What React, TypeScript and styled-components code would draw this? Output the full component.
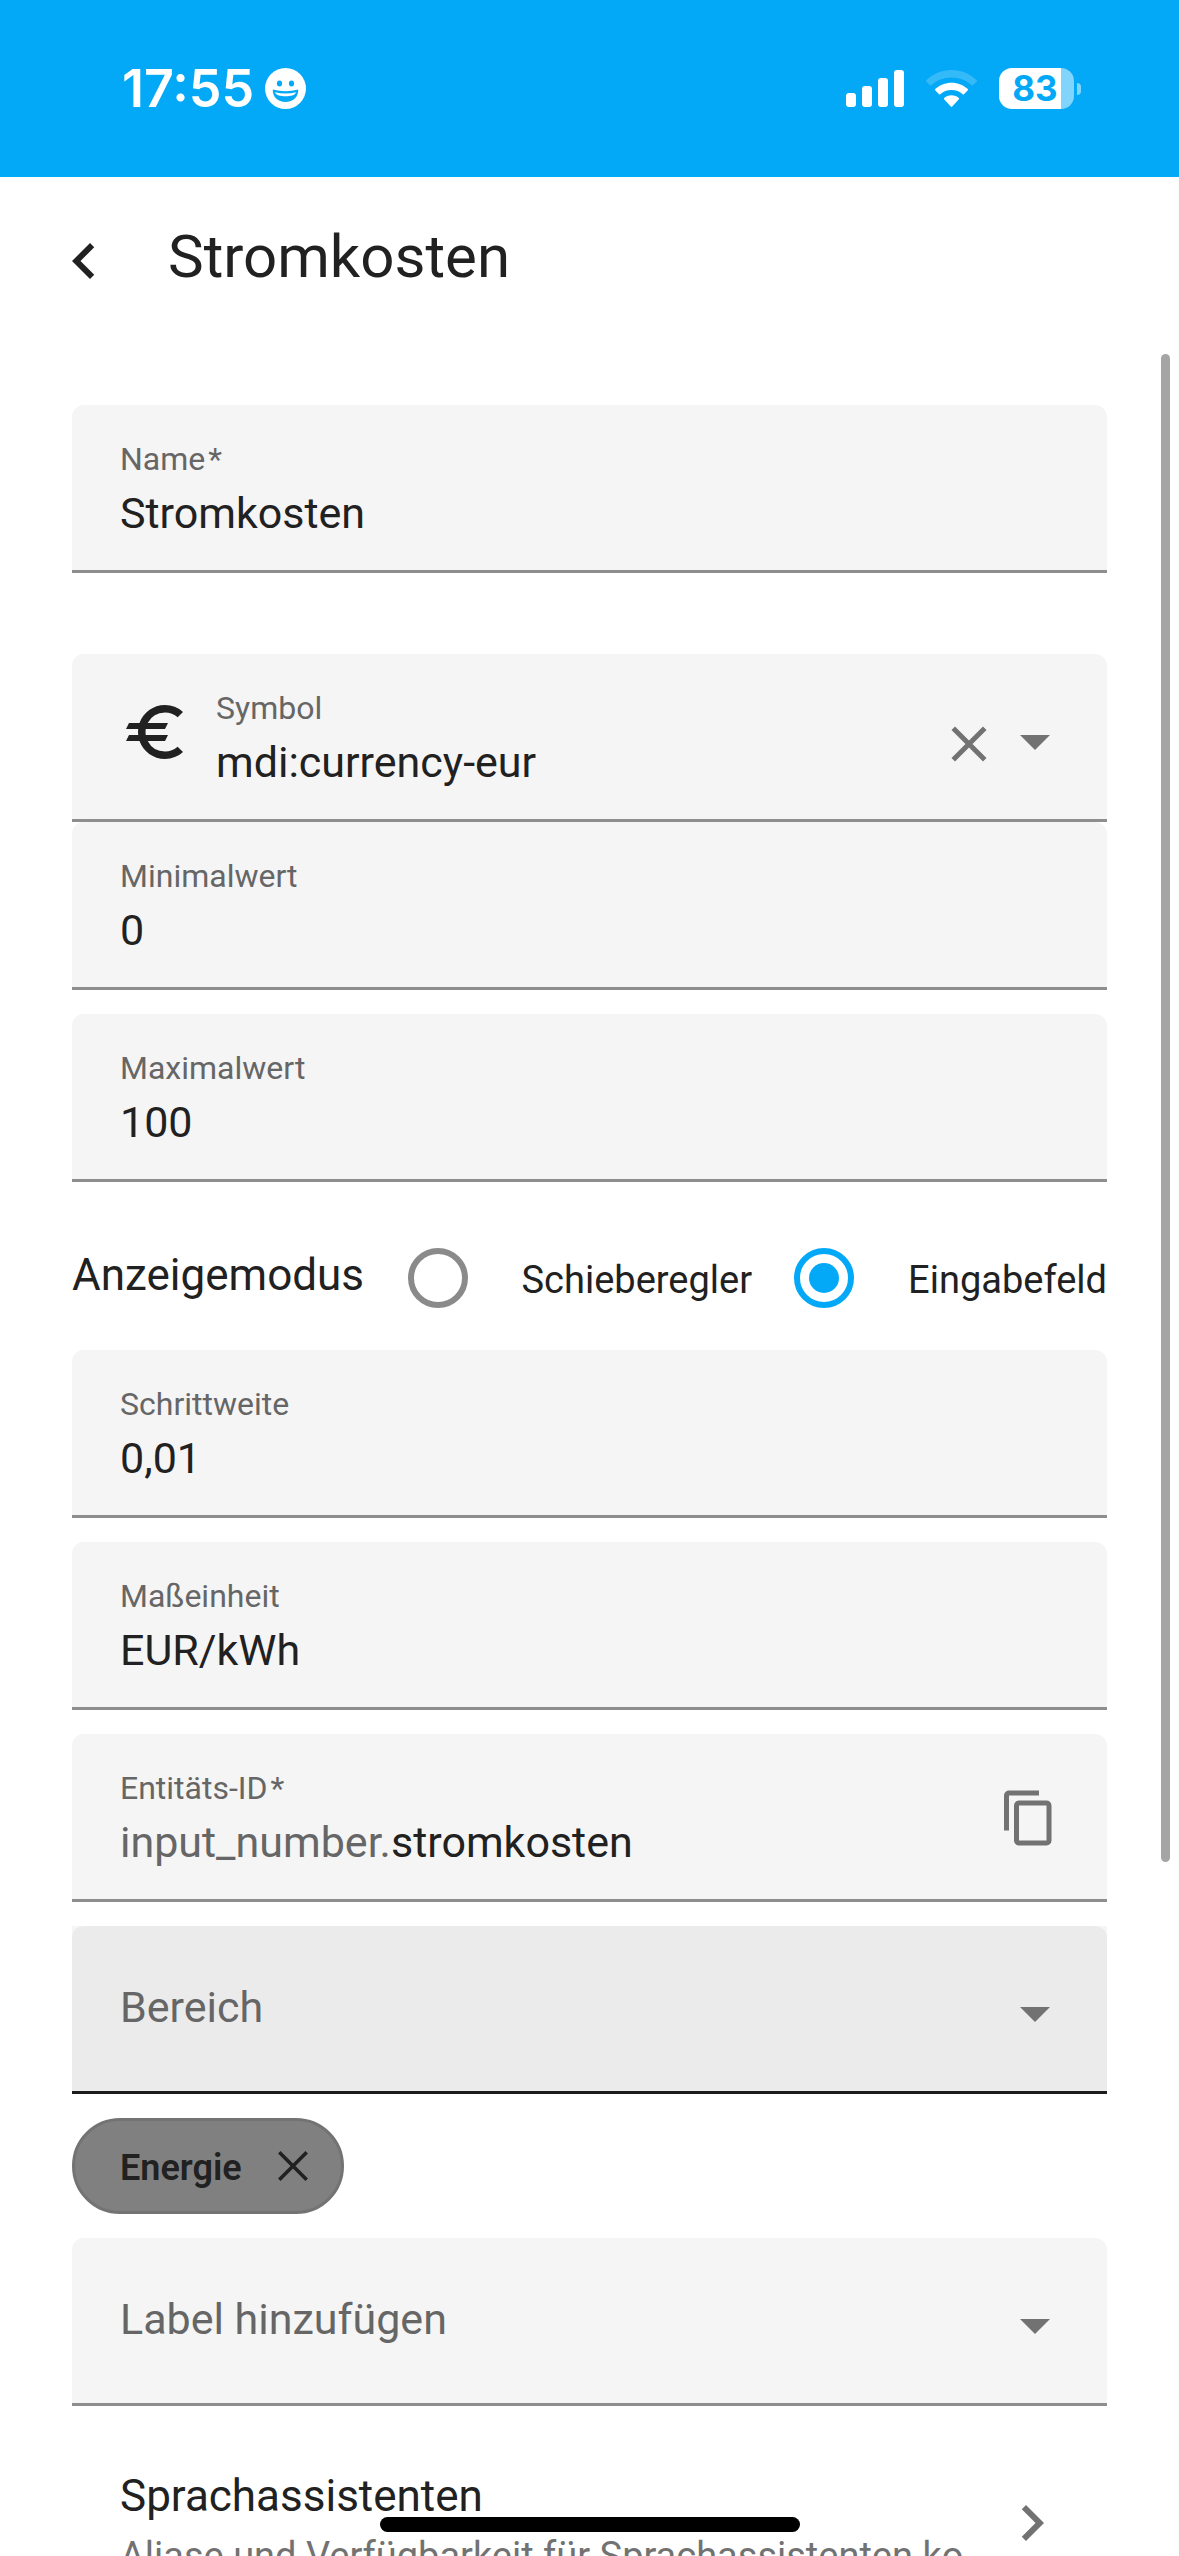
import React, { useId, useState } from 'react';
import styled, { createGlobalStyle } from 'styled-components';

const color = {
  primary: '#03a9f7',
  text: '#212121',
  secondary: '#666666',
  icon: '#727272',
  fill: '#f5f5f5',
  fillActive: '#ebebeb',
  line: '#8e8e8e',
};

const GlobalStyle = createGlobalStyle`
  *, *::before, *::after { box-sizing: border-box; }
  body {
    margin: 0;
    background: #fff;
    color: ${color.text};
    font-family: Roboto, "Noto Sans", sans-serif;
    overflow: hidden;
  }
  button, input, select { font: inherit; color: inherit; }
`;

const Screen = styled.div`
  position: relative;
  display: flex;
  flex-direction: column;
  height: 100vh;
  overflow: hidden;
`;

const StatusBar = styled.div`
  flex: none;
  display: flex;
  align-items: center;
  justify-content: space-between;
  height: 177px;
  padding: 0 98px 0 122px;
  background: ${color.primary};
  color: #fff;
  font-family: Inter, Roboto, sans-serif;
`;

const StatusGroup = styled.div<{ $gap: number }>`
  display: flex;
  align-items: center;
  gap: ${(p) => p.$gap}px;
`;

const Clock = styled.span`
  font-size: 52px;
  line-height: 60px;
  font-weight: 600;
`;

const Battery = styled.span`
  display: flex;
  align-items: center;
  gap: 3px;
`;

const BatteryBody = styled.span`
  display: flex;
  align-items: center;
  justify-content: center;
  width: 75px;
  height: 41px;
  padding-right: 3px;
  border-radius: 13px;
  background: linear-gradient(to right, #fff 83%, #81d4fb 83%);
  color: ${color.primary};
  font-size: 35px;
  line-height: 41px;
  font-weight: 700;
`;

const BatteryTip = styled.span`
  width: 4px;
  height: 12px;
  border-radius: 0 6px 6px 0;
  background: #81d4fb;
`;

const Header = styled.header`
  flex: none;
  display: flex;
  align-items: center;
  gap: 48px;
  height: 168px;
  padding: 0 48px;
`;

const Title = styled.h1`
  margin: 0;
  padding-bottom: 9px;
  font-size: 60px;
  line-height: 72px;
  font-weight: 400;
`;

const IconButton = styled.button<{ $tone?: string }>`
  flex: none;
  display: flex;
  padding: 0;
  border: 0;
  background: none;
  color: ${(p) => p.$tone ?? color.icon};
`;

const Content = styled.main`
  flex: 1;
  min-height: 0;
  padding: 60px 72px 0;
  overflow: hidden;
`;

const Stack = styled.div<{ $top?: number }>`
  display: flex;
  flex-direction: column;
  align-items: stretch;
  gap: 24px;
  margin-top: ${(p) => p.$top ?? 0}px;
`;

const FieldBox = styled.div`
  display: flex;
  align-items: center;
  gap: 24px;
  height: 168px;
  padding: 0 48px;
  border-bottom: 3px solid ${color.line};
  border-radius: 12px 12px 0 0;
  background: ${color.fill};
`;

const FieldText = styled.div`
  flex: 1;
  min-width: 0;
  display: flex;
  flex-direction: column;
  gap: 12px;
  padding-top: 3px;
`;

const FieldLabel = styled.label`
  color: ${color.secondary};
  font-size: 32px;
  line-height: 36px;
`;

const RequiredMark = styled.span`
  margin-left: 3px;
`;

const ValueRow = styled.div`
  display: flex;
  align-items: center;
  font-size: 43px;
  line-height: 48px;
`;

const Prefix = styled.span`
  flex: none;
  color: ${color.secondary};
`;

const ValueInput = styled.input`
  flex: 1;
  min-width: 0;
  width: 100%;
  height: 48px;
  padding: 0;
  border: 0;
  outline: 0;
  background: none;
`;

const FieldActions = styled.div`
  display: flex;
  align-items: center;
  padding-top: 3px;
`;

const ComboActions = styled.div`
  display: flex;
  align-items: flex-end;
  padding-top: 9px;
  margin-right: -12px;
`;

const ClearSlot = styled.span`
  display: flex;
  padding-bottom: 3px;
`;

const LeadingIcon = styled.span`
  display: flex;
  padding-bottom: 9px;
`;

const SelectBacking = styled.div`
  background: ${color.fill};
`;

const SelectField = styled.div<{ $active?: boolean }>`
  display: grid;
  align-items: center;
  height: 168px;
  border-bottom: 3px solid ${(p) => (p.$active ? '#1c1c1c' : color.line)};
  border-radius: 12px 12px 0 0;
  background: ${(p) => (p.$active ? color.fillActive : color.fill)};
  color: ${color.icon};

  > * { grid-area: 1 / 1; }
  > svg { justify-self: end; margin: 9px 36px 0 0; pointer-events: none; }
`;

const Select = styled.select`
  appearance: none;
  width: 100%;
  height: 165px;
  padding: 0 120px 3px 48px;
  border: 0;
  outline: 0;
  background: none;
  color: ${color.secondary};
  font-size: 43px;
  line-height: 48px;
`;

const ModeRow = styled.div`
  display: flex;
  align-items: center;
  justify-content: space-between;
  height: 120px;
  margin: 36px 0 12px;
  white-space: nowrap;
`;

const ModeTitle = styled.span`
  padding-bottom: 6px;
  font-size: 44px;
  line-height: 48px;
`;

const ModeOptions = styled.div`
  display: flex;
  align-items: center;
  gap: 42px;
`;

const ModeOption = styled.label`
  display: flex;
  align-items: center;
  gap: 54px;
  font-size: 38px;
  line-height: 42px;
`;

const ModeName = styled.span`
  padding-top: 3px;
`;

const Radio = styled.input`
  appearance: none;
  display: grid;
  place-items: center;
  width: 60px;
  height: 60px;
  margin: 0;
  border: 6px solid #8a8a8a;
  border-radius: 50%;

  &:checked { border-color: ${color.primary}; }
  &:checked::before {
    content: '';
    width: 30px;
    height: 30px;
    border-radius: 50%;
    background: ${color.primary};
  }
`;

const Chip = styled.span`
  align-self: flex-start;
  display: flex;
  align-items: center;
  gap: 36px;
  height: 96px;
  padding: 0 33px 0 45px;
  border: 3px solid #737373;
  border-radius: 48px;
  background: #808080;
  font-size: 36px;
  line-height: 42px;
  font-weight: 600;
`;

const ChipName = styled.span`
  padding-top: 3px;
`;

const AssistLink = styled.a`
  display: flex;
  align-items: center;
  margin-top: 66px;
  padding: 0 39px 0 48px;
  color: ${color.text};
  text-decoration: none;

  > svg { flex: none; margin-bottom: 6px; color: ${color.icon}; }
`;

const AssistText = styled.span`
  flex: 1;
  min-width: 0;
  display: flex;
  flex-direction: column;
  gap: 12px;
`;

const AssistTitle = styled.span`
  font-size: 44px;
  line-height: 48px;
`;

const AssistDetail = styled.span`
  overflow: hidden;
  color: ${color.icon};
  font-size: 38px;
  line-height: 48px;
  text-overflow: ellipsis;
  white-space: nowrap;
`;

const ScrollThumb = styled.div`
  position: absolute;
  top: 354px;
  right: 9px;
  width: 9px;
  height: 59vh;
  border-radius: 5px;
  background: #a5a5a5;
`;

const HomeIndicator = styled.div`
  position: absolute;
  bottom: 24px;
  left: 50%;
  width: 420px;
  height: 15px;
  margin-left: -210px;
  border-radius: 8px;
  background: #000;
`;

const paths = {
  back: 'M15.41 16.58L10.83 12l4.58-4.59L14 6l-6 6 6 6z',
  forward: 'M8.59 16.58L13.17 12 8.59 7.41 10 6l6 6-6 6z',
  down: 'M7 10l5 5 5-5z',
  close:
    'M19 6.41L17.59 5 12 10.59 6.41 5 5 6.41 10.59 12 5 17.59 6.41 19 12 13.41 17.59 19 19 17.59 13.41 12z',
  copy: 'M19 21H8V7h11m0-2H8a2 2 0 0 0-2 2v14a2 2 0 0 0 2 2h11a2 2 0 0 0 2-2V7a2 2 0 0 0-2-2m-3-4H4a2 2 0 0 0-2 2v14h2V3h12z',
  euro: 'M15 18.5A6.48 6.48 0 0 1 9.24 15H15l1-2H8.58a6.6 6.6 0 0 1 0-2H15l1-2H9.24A6.49 6.49 0 0 1 15 5.5c1.61 0 3.09.59 4.23 1.57L21 5.3A8.96 8.96 0 0 0 15 3c-3.92 0-7.24 2.5-8.5 6H3l-1 2h4.06a8.26 8.26 0 0 0 0 2H3l-1 2h4.5c1.26 3.5 4.58 6 8.5 6 2.31 0 4.41-.87 6-2.3l-1.78-1.77A6.4 6.4 0 0 1 15 18.5z',
};

function Icon({ name, size = 72 }: { name: keyof typeof paths; size?: number }) {
  return (
    <svg width={size} height={size} viewBox="0 0 24 24" fill="currentColor" aria-hidden="true">
      <path d={paths[name]} />
    </svg>
  );
}

function SmileyIcon() {
  return (
    <svg width="41" height="41" viewBox="0 0 41 41" aria-hidden="true">
      <circle cx="20.500" cy="20.500" r="20.500" fill="#fff" />
      <g fill={color.primary}>
        <ellipse cx="14.500" cy="15.500" rx="2.600" ry="3" />
        <ellipse cx="26.500" cy="15.500" rx="2.600" ry="3" />
        <path d="M7.800 21.500Q20.500 25 33.200 21.500C33.600 29 28 34 20.500 34S7.400 29 7.800 21.500Z" />
      </g>
      <path d="M9.800 24.200Q20.500 27 31.200 24.200C29.800 27.300 25.500 28.200 20.500 28.200S11.200 27.300 9.800 24.200Z" fill="#fff" />
    </svg>
  );
}

function SignalIcon() {
  return (
    <svg width="58" height="37" viewBox="0 0 58 37" fill="#fff" aria-hidden="true">
      <rect x="0" y="23" width="10" height="14" rx="3" />
      <rect x="16" y="16" width="10" height="21" rx="3" />
      <rect x="32" y="8" width="10" height="29" rx="3" />
      <rect x="48" y="0" width="10" height="37" rx="3" />
    </svg>
  );
}

function WifiIcon() {
  return (
    <svg width="51" height="37" viewBox="0 0 51 37" fill="#fff" aria-hidden="true">
      <path
        d="M25.500 0C35.400 0 44.300 3.900 50.700 10.200C51.100 10.600 51.100 11 50.700 11.400L47 15.200C46.600 15.600 46.100 15.600 45.700 15.200C40.300 10.300 33.300 7.500 25.500 7.500S10.700 10.300 5.300 15.200C4.900 15.600 4.400 15.600 4 15.200L.3 11.400C-.1 11-.1 10.600.3 10.200C6.700 3.900 15.600 0 25.500 0Z"
        opacity="0.2"
      />
      <path d="M25.500 12.700C31.800 12.700 37.500 15.100 41.800 19.100C42.200 19.500 42.200 19.900 41.800 20.300L38 24.200C37.600 24.600 37.200 24.600 36.800 24.200C33.800 21.600 29.900 20 25.500 20S17.200 21.600 14.200 24.200C13.800 24.600 13.400 24.600 13 24.200L9.200 20.300C8.800 19.900 8.800 19.500 9.200 19.100C13.500 15.100 19.200 12.700 25.500 12.700Z" />
      <path d="M25.500 25.200C28.300 25.200 30.900 26.200 32.800 27.900C33.300 28.300 33.300 28.800 32.900 29.200L26.200 36.500C25.700 37 25.300 37 24.800 36.500L18.100 29.200C17.700 28.800 17.700 28.300 18.200 27.900C20.100 26.200 22.700 25.200 25.500 25.200Z" />
    </svg>
  );
}

function ChipCloseIcon() {
  return (
    <svg width="30" height="30" viewBox="0 0 30 30" fill="none" stroke="currentColor" strokeWidth="3.600" aria-hidden="true">
      <path d="M1.300 1.300L28.700 28.700M28.700 1.300L1.300 28.700" />
    </svg>
  );
}

type TextFieldProps = {
  label: string;
  value: string;
  prefix?: string;
  required?: boolean;
  leading?: React.ReactNode;
  actions?: React.ReactNode;
};

function TextField({ label, value, prefix, required, leading, actions }: TextFieldProps) {
  const id = useId();
  const [text, setText] = useState(value);
  return (
    <FieldBox>
      {leading}
      <FieldText>
        <FieldLabel htmlFor={id}>
          {label}
          {required && <RequiredMark>*</RequiredMark>}
        </FieldLabel>
        <ValueRow>
          {prefix && <Prefix>{prefix}</Prefix>}
          <ValueInput id={id} value={text} onChange={(e) => setText(e.target.value)} />
        </ValueRow>
      </FieldText>
      {actions}
    </FieldBox>
  );
}

function SelectBox({ label, active }: { label: string; active?: boolean }) {
  const field = (
    <SelectField $active={active}>
      <Select aria-label={label} defaultValue="">
        <option value="">{label}</option>
      </Select>
      <Icon name="down" />
    </SelectField>
  );
  return active ? <SelectBacking>{field}</SelectBacking> : field;
}

export default function App() {
  const [mode, setMode] = useState('box');
  return (
    <>
      <GlobalStyle />
      <Screen>
        <StatusBar>
          <StatusGroup $gap={11}>
            <Clock>17:55</Clock>
            <SmileyIcon />
          </StatusGroup>
          <StatusGroup $gap={22}>
            <SignalIcon />
            <WifiIcon />
            <Battery>
              <BatteryBody>83</BatteryBody>
              <BatteryTip />
            </Battery>
          </StatusGroup>
        </StatusBar>
        <Header>
          <IconButton type="button" aria-label="Zurück" $tone={color.text}>
            <Icon name="back" />
          </IconButton>
          <Title>Stromkosten</Title>
        </Header>
        <Content>
          <TextField label="Name" value="Stromkosten" required />
          <Stack $top={81}>
            <div>
              <TextField
                label="Symbol"
                value="mdi:currency-eur"
                leading={
                  <LeadingIcon>
                    <Icon name="euro" />
                  </LeadingIcon>
                }
                actions={
                  <ComboActions>
                    <ClearSlot>
                      <IconButton type="button" aria-label="Löschen">
                        <Icon name="close" size={60} />
                      </IconButton>
                    </ClearSlot>
                    <IconButton type="button" aria-label="Öffnen">
                      <Icon name="down" />
                    </IconButton>
                  </ComboActions>
                }
              />
              <TextField label="Minimalwert" value="0" />
            </div>
            <TextField label="Maximalwert" value="100" />
          </Stack>
          <ModeRow role="radiogroup" aria-label="Anzeigemodus">
            <ModeTitle>Anzeigemodus</ModeTitle>
            <ModeOptions>
              <ModeOption>
                <Radio type="radio" name="mode" checked={mode === 'slider'} onChange={() => setMode('slider')} />
                <ModeName>Schieberegler</ModeName>
              </ModeOption>
              <ModeOption>
                <Radio type="radio" name="mode" checked={mode === 'box'} onChange={() => setMode('box')} />
                <ModeName>Eingabefeld</ModeName>
              </ModeOption>
            </ModeOptions>
          </ModeRow>
          <Stack>
            <TextField label="Schrittweite" value="0,01" />
            <TextField label="Maßeinheit" value="EUR/kWh" />
            <TextField
              label="Entitäts-ID"
              value="stromkosten"
              prefix="input_number."
              required
              actions={
                <FieldActions>
                  <IconButton type="button" aria-label="Kopieren">
                    <Icon name="copy" size={60} />
                  </IconButton>
                </FieldActions>
              }
            />
            <SelectBox label="Bereich" active />
            <Chip>
              <ChipName>Energie</ChipName>
              <IconButton type="button" aria-label="Energie entfernen" $tone={color.text}>
                <ChipCloseIcon />
              </IconButton>
            </Chip>
            <SelectBox label="Label hinzufügen" />
          </Stack>
          <AssistLink href="#sprachassistenten">
            <AssistText>
              <AssistTitle>Sprachassistenten</AssistTitle>
              <AssistDetail>Aliase und Verfügbarkeit für Sprachassistenten konfigurieren</AssistDetail>
            </AssistText>
            <Icon name="forward" />
          </AssistLink>
        </Content>
        <ScrollThumb />
        <HomeIndicator />
      </Screen>
    </>
  );
}
